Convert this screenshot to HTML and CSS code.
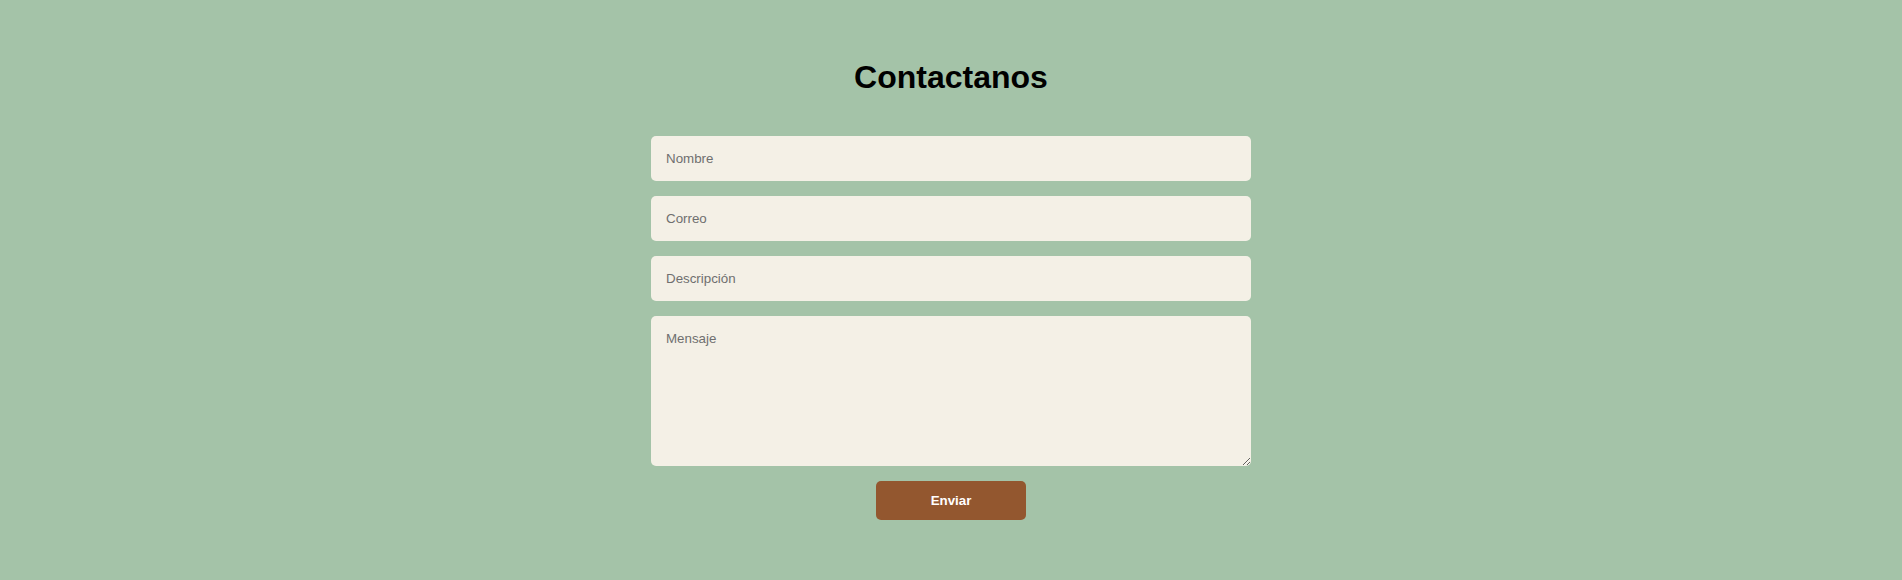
FILE: index.html
```html
<!DOCTYPE html>
<html lang="es">
<head>
<meta charset="utf-8">
<title>Contactanos</title>
<link rel="stylesheet" href="styles.css">
</head>
<body>
<section class="contact">
  <h1 class="contact-title">Contactanos</h1>
  <form class="contact-form">
    <input class="field" type="text" placeholder="Nombre">
    <input class="field" type="email" placeholder="Correo">
    <input class="field" type="text" placeholder="Descripción">
    <textarea class="field field-area" placeholder="Mensaje"></textarea>
    <button class="send" type="button">Enviar</button>
  </form>
</section>
</body>
</html>
```

FILE: styles.css
```css
html, body {
  margin: 0;
  padding: 0;
}
body {
  background: #a4c3a8;
  font-family: "Liberation Sans", Arial, sans-serif;
  min-height: 580px;
}
.contact {
  display: flex;
  flex-direction: column;
  align-items: center;
  padding-top: 59px;
}
.contact-title {
  margin: 0 0 40px;
  font-size: 32px;
  font-weight: bold;
  color: #000;
  line-height: normal;
}
.contact-form {
  width: 600px;
  display: flex;
  flex-direction: column;
  gap: 15px;
}
.field {
  display: block;
  box-sizing: border-box;
  width: 100%;
  margin: 0;
  padding: 15px;
  border: none;
  border-radius: 5px;
  background: #f4f0e6;
  font-family: "Liberation Sans", Arial, sans-serif;
  font-size: 13.333px;
  line-height: normal;
  color: #333;
  outline: none;
}
.field::placeholder {
  color: #6f6f6f;
}
.field-area {
  height: 150px;
  resize: vertical;
}
.send {
  align-self: center;
  width: 150px;
  margin: 0;
  padding: 12px 0;
  border: none;
  border-radius: 5px;
  background: #93572f;
  color: #fff;
  font-family: "Liberation Sans", Arial, sans-serif;
  font-size: 13.333px;
  font-weight: bold;
  line-height: normal;
  cursor: pointer;
}
```
